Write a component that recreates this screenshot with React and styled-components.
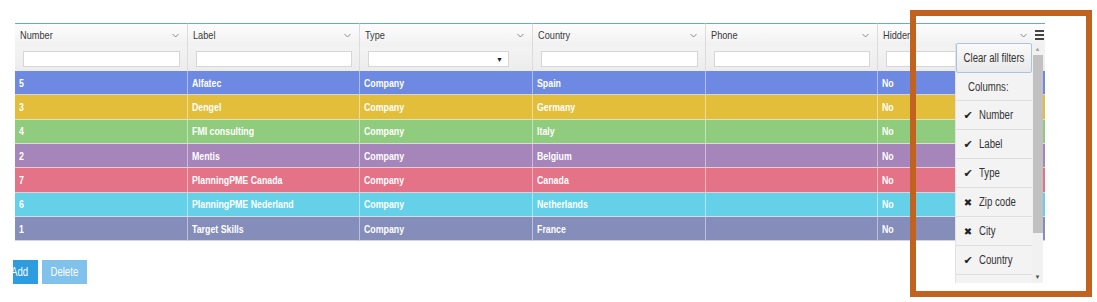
import React from 'react';
import styled, { createGlobalStyle } from 'styled-components';

const GlobalStyle = createGlobalStyle`
    body {
        margin: 0;
        background: #fff;
        font-family: "Liberation Sans", Arial, sans-serif;
    }
`;

// the screenshot's type is a narrow Arial; squeeze the glyphs horizontally
const Txt = styled.span`
    display: inline-block;
    white-space: nowrap;
    transform: scaleX(0.8);
    transform-origin: ${p => (p.center ? 'center' : 'left')} center;
`;

const Page = styled.div`
    position: relative;
    width: 1097px;
    height: 302px;
    padding-top: 23px;
    box-sizing: border-box;
    overflow: hidden;
`;

const Grid = styled.div`
    position: relative;
    margin-left: 15px;
    width: 1030px;
    display: grid;
    grid-template-columns: 173px 172px 173px 173px 172px 167px;
`;

const HeadCell = styled.div`
    height: 24px;
    box-sizing: border-box;
    border-top: 1px solid #5fb0c9;
    border-right: ${p => (p.last ? 'none' : '1px solid #dcdcdc')};
    background: linear-gradient(#fdfdfd, #f0f0f0);
    display: flex;
    align-items: center;
    padding: 0 8px 1px 5px;
    font-size: 11.5px;
    color: #3a3a3a;
    gap: 8px;
`;

const HeadLabel = styled.span`
    flex: 1;
`;

const FilterCell = styled.div`
    height: 24px;
    box-sizing: border-box;
    border-right: ${p => (p.last ? 'none' : '1px solid #dcdcdc')};
    background: linear-gradient(#f3f3f3, #ececec);
    display: flex;
    align-items: center;
    padding: 0 ${p => (p.select ? '23px' : '7px')} 0 8px;
`;

const FilterInput = styled.div`
    flex: 1;
    height: 16px;
    box-sizing: border-box;
    background: #fff;
    border: 1px solid #d6d6d6;
    display: flex;
    align-items: center;
    justify-content: flex-end;
    padding-right: 5px;
    font-size: 7px;
    color: #222;
`;

const Cell = styled.div`
    height: 24.33px;
    box-sizing: border-box;
    background: ${p => p.color};
    border-right: ${p => (p.last ? 'none' : '1px solid rgba(255,255,255,0.45)')};
    border-bottom: 1px solid rgba(230,230,230,0.8);
    display: flex;
    align-items: center;
    padding-left: 4px;
    color: #fff;
    font-size: 11px;
    font-weight: bold;
`;

const Buttons = styled.div`
    display: flex;
    gap: 4px;
    margin: 19px 0 0 13px;
    overflow: hidden;
    width: 80px;
`;

const Button = styled.div`
    height: 24px;
    display: flex;
    align-items: center;
    padding: 0 ${p => (p.clip ? '6px 0 3px' : '5px')};
    margin-left: ${p => (p.clip ? '-5px' : '0')};
    background: ${p => (p.light ? '#80c2ec' : '#2d9de0')};
    color: #fff;
    font-size: 12px;
`;

const MenuIcon = styled.span`
    display: flex;
    flex-direction: column;
    gap: 2px;
    margin-right: -7px;
    span {
        display: block;
        width: 9px;
        height: 2px;
        background: #444;
    }
`;

const Menu = styled.div`
    position: absolute;
    left: 955px;
    top: 43px;
    width: 88px;
    height: 240px;
    display: flex;
    background: #f3f3f3;
    border-left: 1px solid #e2e2e2;
    box-sizing: border-box;
    overflow: hidden;
`;

const MenuList = styled.div`
    width: 76px;
    display: flex;
    flex-direction: column;
`;

const ClearButton = styled.div`
    height: 30px;
    box-sizing: border-box;
    border: 1px solid #aac2e4;
    border-radius: 2px;
    background: linear-gradient(#fafafa, #e9e9e9);
    display: flex;
    align-items: center;
    justify-content: center;
    font-size: 12px;
    color: #333;
    flex-shrink: 0;
`;

const MenuItem = styled.div`
    height: ${p => (p.first ? '28px' : '29px')};
    flex-shrink: 0;
    box-sizing: border-box;
    border-bottom: 1px solid #dedede;
    display: flex;
    align-items: center;
    gap: 6px;
    padding-left: ${p => (p.plain ? '12px' : '7px')};
    font-size: 12px;
    color: #333;
`;

const Mark = styled.span`
    width: 10px;
    font-family: "DejaVu Sans", sans-serif;
    font-size: ${p => (p.off ? '10px' : '11px')};
    color: #222;
    text-align: center;
`;

const Scrollbar = styled.div`
    width: 12px;
    background: #f1f1f1;
    display: flex;
    flex-direction: column;
    align-items: center;
`;

const Arrow = styled.span`
    height: 12px;
    font-size: 6px;
    line-height: 12px;
    color: ${p => (p.dark ? '#505050' : '#a3a3a3')};
`;

const Thumb = styled.div`
    width: 10px;
    height: 178px;
    background: #c1c1c1;
`;

const Highlight = styled.div`
    position: absolute;
    left: 910px;
    top: 10px;
    width: 182px;
    height: 287px;
    box-sizing: border-box;
    border: 6px solid #c2621f;
    pointer-events: none;
`;

const Chevron = () => (
    <svg width="7" height="5" viewBox="0 0 7 5">
        <path d="M0.5 1 L3.5 4 L6.5 1" fill="none" stroke="#8a8a8a" strokeWidth="1" />
    </svg>
);

const columns = ['Number', 'Label', 'Type', 'Country', 'Phone', 'Hidden'];

const rows = [
    ['5', 'Alfatec', 'Spain', '#6e89e1'],
    ['3', 'Dengel', 'Germany', '#e3be3b'],
    ['4', 'FMI consulting', 'Italy', '#90cc7e'],
    ['2', 'Mentis', 'Belgium', '#a685bb'],
    ['7', 'PlanningPME Canada', 'Canada', '#e47387'],
    ['6', 'PlanningPME Nederland', 'Netherlands', '#64d1e9'],
    ['1', 'Target Skills', 'France', '#858dbb'],
];

const menuColumns = [
    ['Number', true],
    ['Label', true],
    ['Type', true],
    ['Zip code', false],
    ['City', false],
    ['Country', true],
    ['', false],
];

const App = () => {
    return (
        <Page>
            <GlobalStyle />
            <Grid>
                {columns.map((c, i) => (
                    <HeadCell key={c} last={i === 5}>
                        <HeadLabel><Txt>{c}</Txt></HeadLabel>
                        <Chevron />
                        {i === 5 && (
                            <MenuIcon>
                                <span /><span /><span />
                            </MenuIcon>
                        )}
                    </HeadCell>
                ))}
                {columns.map((c, i) => (
                    <FilterCell key={c} last={i === 5} select={c === 'Type'}>
                        <FilterInput>{c === 'Type' ? '▼' : ''}</FilterInput>
                    </FilterCell>
                ))}
                {rows.map(([num, label, country, color]) => (
                    <React.Fragment key={num}>
                        <Cell color={color}><Txt>{num}</Txt></Cell>
                        <Cell color={color}><Txt>{label}</Txt></Cell>
                        <Cell color={color}><Txt>Company</Txt></Cell>
                        <Cell color={color}><Txt>{country}</Txt></Cell>
                        <Cell color={color}></Cell>
                        <Cell color={color} last><Txt>No</Txt></Cell>
                    </React.Fragment>
                ))}
            </Grid>
            <Buttons>
                <Button clip><Txt>Add</Txt></Button>
                <Button light><Txt center>Delete</Txt></Button>
            </Buttons>
            <Menu>
                <MenuList>
                    <ClearButton><Txt center>Clear all filters</Txt></ClearButton>
                    <MenuItem plain first><Txt>Columns:</Txt></MenuItem>
                    {menuColumns.map(([name, on], i) => (
                        <MenuItem key={i}>
                            {name && <Mark off={!on}>{on ? '✔' : '✖'}</Mark>}
                            <Txt>{name}</Txt>
                        </MenuItem>
                    ))}
                </MenuList>
                <Scrollbar>
                    <Arrow>▲</Arrow>
                    <Thumb />
                    <div style={{ flex: 1 }} />
                    <Arrow dark>▼</Arrow>
                </Scrollbar>
            </Menu>
            <Highlight />
        </Page>
    );
};

export default App;
